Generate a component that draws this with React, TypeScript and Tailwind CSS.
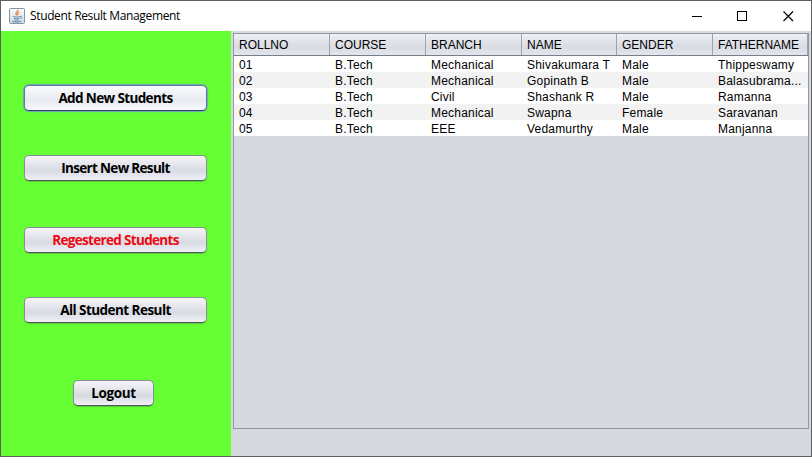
const columns = [
  { label: 'ROLLNO', width: 'w-24' },
  { label: 'COURSE', width: 'w-24' },
  { label: 'BRANCH', width: 'w-24' },
  { label: 'NAME', width: 'w-[95px]' },
  { label: 'GENDER', width: 'w-24' },
  { label: 'FATHERNAME', width: 'w-[95px]' },
];

const rows = [
  ['01', 'B.Tech', 'Mechanical', 'Shivakumara T', 'Male', 'Thippeswamy'],
  ['02', 'B.Tech', 'Mechanical', 'Gopinath B', 'Male', 'Balasubrama...'],
  ['03', 'B.Tech', 'Civil', 'Shashank R', 'Male', 'Ramanna'],
  ['04', 'B.Tech', 'Mechanical', 'Swapna', 'Female', 'Saravanan'],
  ['05', 'B.Tech', 'EEE', 'Vedamurthy', 'Male', 'Manjanna'],
];

function JavaIcon() {
  return (
    <svg width="16" height="16" viewBox="0 0 16 16" fill="none">
      <defs>
        <linearGradient id="tile" x1="0" y1="0" x2="0" y2="1">
          <stop stopColor="#fbfcfd" />
          <stop offset="1" stopColor="#cfd8e1" />
        </linearGradient>
      </defs>
      <rect x=".5" y=".5" width="15" height="15" rx="1" fill="url(#tile)" stroke="#8295a8" />
      <path d="M8.8 1.8c1 1.8-3.2 2.5-1.7 4.6l.7 1M10.4 4.2C8.3 5.1 8.1 5.8 9 7" stroke="#e67b32" strokeWidth="1.2" />
      <path d="M4.2 8.5c1.5.6 5 .6 6.6 0M5 10.3c1.5.5 4 .5 5.5 0M5.5 12c1.4.4 3.2.4 4.4 0M3.2 13.3c2.2.9 6.8.9 9 0M11 8.5c2.3-.5 2.2 1.7.2 2.2" stroke="#537e9f" strokeWidth=".9" />
    </svg>
  );
}

function SideButton({ label, className }: { label: string; className: string }) {
  return (
    <button
      className={`flex h-[26px] shrink-0 items-center justify-center rounded-[5px] border font-['Open_Sans',sans-serif] text-[13.5px] leading-4 font-bold whitespace-nowrap ${className}`}
    >
      {label}
    </button>
  );
}

const plain =
  'border-[#8c8f9a] border-b-[#50545e] bg-linear-to-b from-[#f6f6f9] via-[#d8dae2] via-60% to-[#f0f1f7] shadow-[0_1px_1px_#55c936]';

export default function App() {
  return (
    <div className="flex h-[457px] w-[812px] flex-col overflow-hidden border border-[#5e5e5e] bg-[#d6d9df] text-black">
      <header className="flex h-[30px] shrink-0 items-center bg-white pl-2">
        <JavaIcon />
        <h1 className="ml-[5px] flex-1 font-['Open_Sans',sans-serif] text-[12px] leading-4 tracking-[-0.36px] whitespace-nowrap">
          Student Result Management
        </h1>
        <svg width="130" height="29" viewBox="0 0 130 29" fill="none" stroke="#000" className="shrink-0">
          <path d="M11 14.5h10" shapeRendering="crispEdges" />
          <rect x="56.5" y="9.5" width="9" height="9" shapeRendering="crispEdges" />
          <path d="m102.5 9.5 9.5 9.5m0-9.5-9.5 9.5" strokeWidth="1.2" />
        </svg>
      </header>
      <div className="flex min-h-0 flex-1">
        <nav className="flex w-[230px] shrink-0 flex-col items-center bg-[#66ff33] pt-[54px] pr-[1px]">
          <SideButton
            label="Add New Students"
            className="w-[183px] border-[#5f77a2] border-b-[#253d70] bg-linear-to-b from-[#fafbfc] via-[#e7e9ef] via-60% to-[#f8f9fc] tracking-[-0.62px] shadow-[0_0_1px_1px_#6fa4b5]"
          />
          <SideButton label="Insert New Result" className={`mt-[44px] w-[183px] tracking-[-0.68px] ${plain}`} />
          <SideButton label="Regestered Students" className={`mt-[46px] w-[183px] tracking-[-0.68px] text-[#ed0812] ${plain}`} />
          <SideButton label="All Student Result" className={`mt-[44px] w-[183px] tracking-[-0.55px] ${plain}`} />
          <SideButton label="Logout" className={`mt-[57px] mr-[4px] w-[81px] tracking-[-0.4px] ${plain}`} />
        </nav>
        <main className="pt-[2px] pl-[2px]">
          <div className="h-[396px] w-[576px] border border-[#9297a1] font-['Liberation_Sans',Arial,sans-serif] text-[12px]">
            <div className="flex h-[22px] border-b border-[#777e8b] bg-linear-to-b from-[#eff0f4] via-[#d9dce4] via-60% to-[#e3e5ec]">
              {columns.map((column) => (
                <div key={column.label} className={`shrink-0 border-r border-[#9da3ae] pl-[5px] leading-[22px] ${column.width}`}>
                  {column.label}
                </div>
              ))}
            </div>
            <div>
              {rows.map((row) => (
                <div key={row[0]} className="flex h-4 odd:bg-white even:bg-[#f2f2f2]">
                  {row.map((value, index) => (
                    <div key={index} className={`shrink-0 pl-[5px] leading-[18px] tracking-[0.2px] whitespace-nowrap ${columns[index].width}`}>
                      {value}
                    </div>
                  ))}
                </div>
              ))}
            </div>
          </div>
        </main>
      </div>
    </div>
  );
}
